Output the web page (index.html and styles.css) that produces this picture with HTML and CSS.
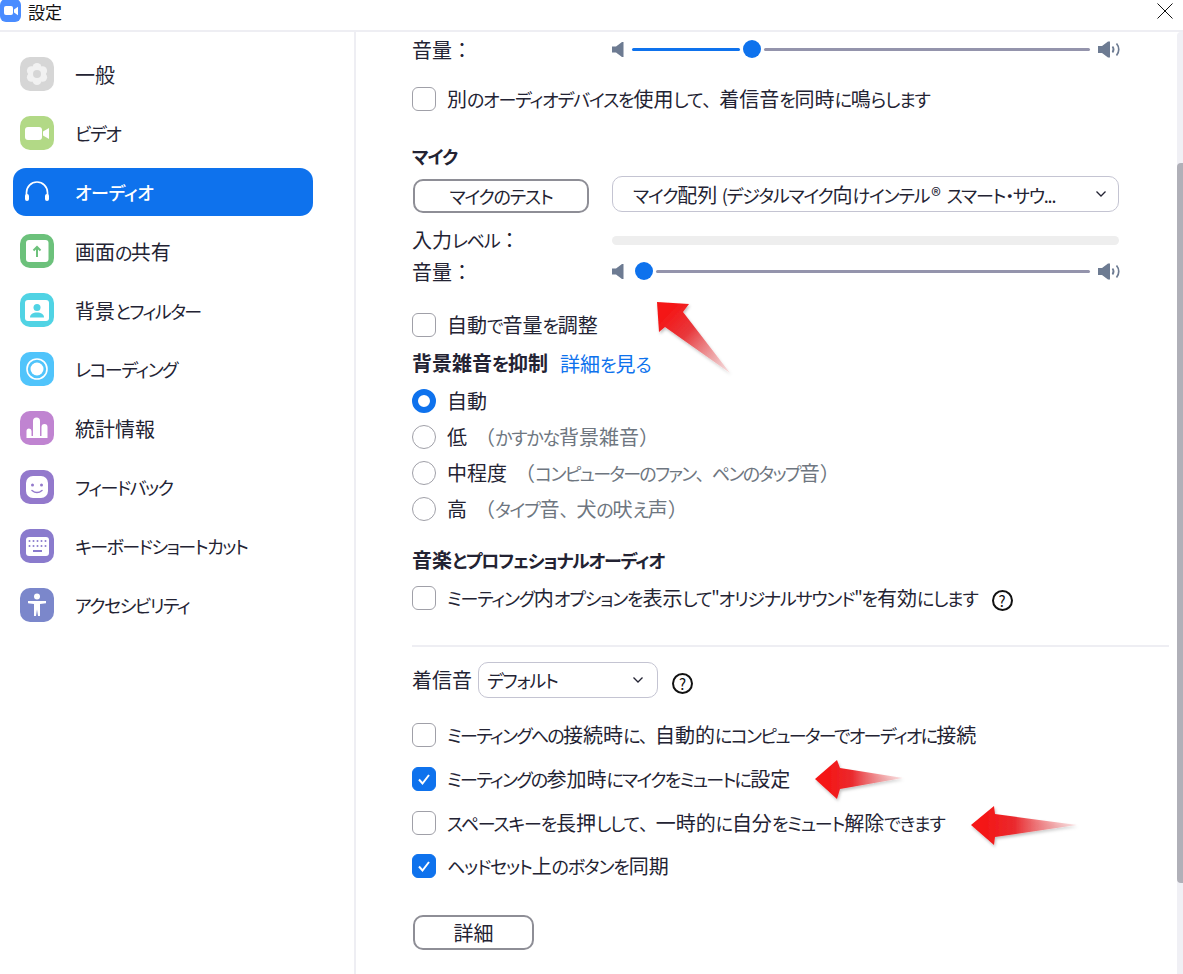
FILE: index.html
```html
<!DOCTYPE html>
<html lang="ja">
<head>
<meta charset="utf-8">
<title>設定</title>
<link rel="stylesheet" href="styles.css">
</head>
<body>
<div class="window">
  <header class="titlebar">
    <svg class="logo" viewBox="0 0 21 22"><rect x="0" y="-1" width="21" height="23" rx="6" fill="#4a8cff"/><rect x="4" y="6" width="9" height="9" rx="2" fill="#fff"/><path d="M14 9.500l4-2.700v8.400l-4-2.700z" fill="#fff"/></svg>
    <span class="title">設定</span>
    <svg class="close" viewBox="0 0 16 16"><path d="M.5.5l15 15M15.500.5l-15 15" stroke="#111" stroke-width="1" fill="none"/></svg>
  </header>
  <div class="body">
    <nav class="sidebar">
      <a class="nav-item"><svg class="nav-icon" viewBox="0 0 34 34"><rect width="34" height="34" rx="10" fill="#d6d6d6"/><g fill="#f1f1f1"><circle cx="17" cy="10.500" r="4.500"/><circle cx="17" cy="23.500" r="4.500"/><circle cx="11.400" cy="13.750" r="4.500"/><circle cx="22.600" cy="13.750" r="4.500"/><circle cx="11.400" cy="20.250" r="4.500"/><circle cx="22.600" cy="20.250" r="4.500"/><circle cx="17" cy="17" r="7"/></g><circle cx="17" cy="17" r="4" fill="#d6d6d6"/></svg><span>一般</span></a>
      <a class="nav-item"><svg class="nav-icon" viewBox="0 0 34 34"><rect width="34" height="34" rx="10" fill="#b2d986"/><rect x="5" y="11" width="17" height="13" rx="3" fill="#fff"/><path d="M23 15.500l6-3.500v11l-6-3.500z" fill="#fff"/></svg><span class="k">ビデオ</span></a>
      <a class="nav-item active"><svg class="nav-icon" viewBox="0 0 34 34"><path d="M6.500 22v-4.500a10.500 10.500 0 0 1 21 0v4.500" fill="none" stroke="#fff" stroke-width="1.700"/><rect x="5" y="19" width="4" height="7" rx="2" fill="#fff"/><rect x="25" y="19" width="4" height="7" rx="2" fill="#fff"/></svg><span class="k">オーディオ</span></a>
      <a class="nav-item"><svg class="nav-icon" viewBox="0 0 34 34"><rect width="34" height="34" rx="10" fill="#6cc17b"/><rect x="6" y="6" width="22.500" height="22" rx="3" fill="#fff"/><path d="M17 23v-9M13.500 16.500l3.500-3.500 3.500 3.500" fill="none" stroke="#6cc17b" stroke-width="2"/></svg><span>画面<span class="k">の</span>共有</span></a>
      <a class="nav-item"><svg class="nav-icon" viewBox="0 0 34 34"><rect width="34" height="34" rx="10" fill="#50d3e4"/><rect x="5" y="7" width="24" height="21" rx="3" fill="#fff"/><circle cx="17" cy="14.500" r="3.500" fill="#50d3e4"/><path d="M10 24.500c0-3.500 3-5 7-5s7 1.500 7 5z" fill="#50d3e4"/></svg><span>背景<span class="k">とフィルター</span></span></a>
      <a class="nav-item"><svg class="nav-icon" viewBox="0 0 34 34"><rect width="34" height="34" rx="10" fill="#50c4fb"/><circle cx="17" cy="17" r="10" fill="none" stroke="#fff" stroke-width="1.600"/><circle cx="17" cy="17" r="6.500" fill="#fff"/></svg><span class="k">レコーディング</span></a>
      <a class="nav-item"><svg class="nav-icon" viewBox="0 0 34 34"><rect width="34" height="34" rx="10" fill="#c084d1"/><path d="M6.500 27v-7a2.500 2.500 0 0 1 5 0v5h1.500v-15a3.500 3.500 0 0 1 7 0v15h1.500v-9a3 3 0 0 1 6 0v11z" fill="#fff"/></svg><span>統計情報</span></a>
      <a class="nav-item"><svg class="nav-icon" viewBox="0 0 34 34"><rect width="34" height="34" rx="10" fill="#9379cc"/><rect x="6" y="6" width="22" height="22" rx="7" fill="#fff"/><circle cx="12.500" cy="15" r="1.500" fill="#9379cc"/><circle cx="21.500" cy="15" r="1.500" fill="#9379cc"/><path d="M12 20.500c3 2.500 7 2.500 10 0" fill="none" stroke="#9379cc" stroke-width="1.500" stroke-linecap="round"/></svg><span class="k">フィードバック</span></a>
      <a class="nav-item"><svg class="nav-icon" viewBox="0 0 34 34"><rect width="34" height="34" rx="10" fill="#8a7bcd"/><rect x="6" y="8" width="23" height="19" rx="3" fill="#fff"/><g fill="#8a7bcd"><circle cx="9.500" cy="12" r="1"/><circle cx="13.500" cy="12" r="1"/><circle cx="17.500" cy="12" r="1"/><circle cx="21.500" cy="12" r="1"/><circle cx="25.500" cy="12" r="1"/><circle cx="9.500" cy="17" r="1"/><circle cx="13.500" cy="17" r="1"/><circle cx="17.500" cy="17" r="1"/><circle cx="21.500" cy="17" r="1"/><circle cx="25.500" cy="17" r="1"/><rect x="13" y="21" width="9" height="2"/></g></svg><span class="k">キーボードショートカット</span></a>
      <a class="nav-item"><svg class="nav-icon" viewBox="0 0 34 34"><rect width="34" height="34" rx="10" fill="#7b87cb"/><circle cx="17" cy="8.500" r="3" fill="#fff"/><path d="M8 13h18v2.200l-6 .8v12h-2l-1-6.500-1 6.500h-2v-12l-6-.8z" fill="#fff"/></svg><span class="k">アクセシビリティ</span></a>
    </nav>
    <main class="content">
      <div class="pane">
        <div class="row row-vol-1">
          <span class="label">音量<span class="fw">：</span></span>
          <div class="slider">
            <svg class="spk-low" viewBox="0 0 12 15"><path d="M0 4.500h4l6-4.500h1.500v15h-1.500l-6-4.500h-4z" fill="#6d7b92"/></svg>
            <span class="track track-on track-a"></span><span class="thumb"></span><span class="track"></span>
            <svg class="spk-high" viewBox="0 0 23 17"><path d="M0 5h4l6-4.500h2v16h-2l-6-4.500h-4z" fill="#6d7b92"/><path d="M14.500 5.500c1.500 2 1.500 4 0 6M18.500 2.500c3 3.500 3 8.500 0 12" stroke="#6d7b92" stroke-width="1.700" fill="none"/></svg>
          </div>
        </div>
        <label class="check m22"><span class="box"></span><span>別<span class="k">のオーディオデバイスを</span>使用<span class="k">して<span class="fw">、</span></span>着信音<span class="k">を</span>同時<span class="k">に</span>鳴<span class="k">らします</span></span></label>

        <h2 class="heading m33 k">マイク</h2>
        <div class="row row-mic">
          <button class="btn btn-test k">マイクのテスト</button>
          <div class="select select-mic"><span class="select-text"><span class="k">マイク</span>配列 <span class="k">(デジタルマイク</span>向<span class="k">けインテル<span class="reg">®</span>スマート・サウ...</span></span><svg class="chev" viewBox="0 0 10 6"><path d="M.5.500l4.500 4.500 4.500-4.500" fill="none" stroke="#232333" stroke-width="1.300"/></svg></div>
        </div>
        <div class="row row-level"><span class="label">入力<span class="k">レベル</span><span class="fw">：</span></span><span class="level"></span></div>
        <div class="row row-vol-2">
          <span class="label">音量<span class="fw">：</span></span>
          <div class="slider">
            <svg class="spk-low" viewBox="0 0 12 15"><path d="M0 4.500h4l6-4.500h1.500v15h-1.500l-6-4.500h-4z" fill="#6d7b92"/></svg>
            <span class="thumb thumb-min"></span><span class="track"></span>
            <svg class="spk-high" viewBox="0 0 23 17"><path d="M0 5h4l6-4.500h2v16h-2l-6-4.500h-4z" fill="#6d7b92"/><path d="M14.500 5.500c1.500 2 1.500 4 0 6M18.500 2.500c3 3.500 3 8.500 0 12" stroke="#6d7b92" stroke-width="1.700" fill="none"/></svg>
          </div>
        </div>
        <label class="check m29"><span class="box"></span><span>自動<span class="k">で</span>音量<span class="k">を</span>調整</span></label>

        <div class="heading-row m14"><h2 class="heading">背景雑音<span class="k">を</span>抑制</h2><a class="link">詳細<span class="k">を</span>見<span class="k">る</span></a></div>
        <div class="radios">
          <label class="check"><span class="radio on"></span><span>自動</span></label>
          <label class="check"><span class="radio"></span><span>低</span><span class="hint"><span class="fw">（</span><span class="k">かすかな</span>背景雑音<span class="fw">）</span></span></label>
          <label class="check"><span class="radio"></span><span>中程度</span><span class="hint"><span class="fw">（</span><span class="k tight">コンピューターのファン<span class="fw">、</span>ペンのタップ</span>音<span class="fw">）</span></span></label>
          <label class="check"><span class="radio"></span><span>高</span><span class="hint"><span class="fw">（</span><span class="k">タイプ</span>音<span class="k fw">、</span>犬<span class="k">の</span>吠<span class="k">え</span>声<span class="fw">）</span></span></label>
        </div>

        <h2 class="heading m27">音楽<span class="k">とプロフェショナルオーディオ</span></h2>
        <label class="check m14"><span class="box"></span><span><span class="k">ミーティング</span>内<span class="k">オプションを</span>表示<span class="k">して"オリジナルサウンド"を</span>有効<span class="k">にします</span></span><span class="help help-a">?</span></label>

        <hr class="divider">

        <div class="row row-ring">
          <span class="ring-label">着信音</span>
          <div class="select select-ring"><span class="select-text k">デフォルト</span><svg class="chev" viewBox="0 0 10 6"><path d="M.5.500l4.500 4.500 4.500-4.500" fill="none" stroke="#232333" stroke-width="1.300"/></svg></div>
          <span class="help help-b">?</span>
        </div>
        <label class="check m26"><span class="box"></span><span><span class="k tight">ミーティングへの</span>接続時<span class="k tight">に<span class="fw">、</span></span>自動的<span class="k tight">にコンピューターでオーディオに</span>接続</span></label>
        <label class="check m20"><span class="box checked"><svg viewBox="0 0 24 24"><path d="M7 12.500l3.500 4L17 8" fill="none" stroke="#fff" stroke-width="2"/></svg></span><span><span class="k tight">ミーティングの</span>参加時<span class="k tight">にマイクをミュートに</span>設定</span></label>
        <label class="check m20"><span class="box"></span><span><span class="k">スペースキーを</span>長押<span class="k">しして<span class="fw">、</span></span>一時的<span class="k">に</span>自分<span class="k">をミュート</span>解除<span class="k">できます</span></span></label>
        <label class="check m19"><span class="box checked"><svg viewBox="0 0 24 24"><path d="M7 12.500l3.500 4L17 8" fill="none" stroke="#fff" stroke-width="2"/></svg></span><span><span class="k">ヘッドセット</span>上<span class="k">のボタンを</span>同期</span></label>
        <button class="btn btn-detail">詳細</button>
      </div>
      <div class="scrollbar"><span class="scroll-thumb"></span></div>
    </main>
  </div>
  <svg class="annotations" viewBox="0 0 1183 974">
    <defs>
      <linearGradient id="ga" gradientUnits="userSpaceOnUse" x1="665" y1="312" x2="730" y2="373"><stop offset="0" stop-color="#f51414"/><stop offset=".35" stop-color="#e8383c"/><stop offset="1" stop-color="#f4c4c6" stop-opacity=".5"/></linearGradient>
      <linearGradient id="gb" gradientUnits="userSpaceOnUse" x1="825" y1="779" x2="903" y2="779"><stop offset="0" stop-color="#f51414"/><stop offset=".35" stop-color="#ea2a2e"/><stop offset="1" stop-color="#f4c4c6" stop-opacity=".5"/></linearGradient>
      <linearGradient id="gc" gradientUnits="userSpaceOnUse" x1="981" y1="825" x2="1077" y2="825"><stop offset="0" stop-color="#f51414"/><stop offset=".35" stop-color="#ea2a2e"/><stop offset="1" stop-color="#f4c4c6" stop-opacity=".5"/></linearGradient>
      <filter id="sh" x="-20%" y="-20%" width="140%" height="140%"><feDropShadow dx="1" dy="2" stdDeviation="1.500" flood-color="#000" flood-opacity=".25"/></filter>
    </defs>
    <path d="M657 302L689 304L683 312L730 373L665 327L659 332Z" fill="url(#ga)" filter="url(#sh)"/>
    <path d="M815 779L837 760L840 768L903 778L840 789L837 799Z" fill="url(#gb)" filter="url(#sh)"/>
    <path d="M971 825L994 806L995 814L1077 825L995 837L994 845Z" fill="url(#gc)" filter="url(#sh)"/>
  </svg>
</div>
</body>
</html>
```
FILE: styles.css
```css
* { box-sizing: border-box; }
html, body { margin: 0; padding: 0; background: #fff; }
body {
  font-family: "Noto Sans CJK JP", "Noto Sans", sans-serif;
  font-feature-settings: "palt";
  color: #232333;
  font-size: 20px;
}
.k { font-size: 18px; letter-spacing: -1.200px; }
.k.tight { letter-spacing: -1.700px; }
.fw { font-feature-settings: normal; }
.reg { font-size: 20px; letter-spacing: 0; margin: 0 6px 0 2px; }
.window { position: relative; width: 1183px; height: 974px; overflow: hidden; display: flex; flex-direction: column; }
.titlebar { height: 32px; flex: none; border-bottom: 2px solid #eeeef3; display: flex; align-items: flex-start; }
.logo { width: 21px; height: 22px; flex: none; }
.title { margin-left: 7px; font-size: 17px; line-height: 24px; color: #111; }
.close { width: 16px; height: 16px; margin: 3px 10px 0 auto; flex: none; }
.body { flex: 1; display: flex; min-height: 0; }
.sidebar { width: 356px; flex: none; border-right: 2px solid #eeeef3; padding: 18px 0 0 13px; display: flex; flex-direction: column; gap: 11px; }
.nav-item { width: 299.500px; height: 48px; padding-left: 7px; border-radius: 13px; display: flex; align-items: center; gap: 21px; }
.nav-item .k { letter-spacing: -1.500px; }
.nav-item.active { background: #0e72ed; color: #fff; font-weight: 500; }
.nav-item.active .k { letter-spacing: -.4px; }
.nav-icon { width: 34px; height: 34px; flex: none; }
.content { flex: 1; display: flex; min-width: 0; }
.pane { flex: 1; padding: 3px 8px 0 56px; display: flex; flex-direction: column; align-items: flex-start; min-width: 0; }
.scrollbar { width: 6px; flex: none; background: #f0f0f5; border-radius: 4px 0 0 0; }
.scroll-thumb { display: block; margin-top: 131px; height: 720px; background: #b0b0b8; border-radius: 4px 0 0 4px; }
.row { display: flex; align-items: center; width: 100%; }
.label { width: 200px; flex: none; line-height: 24px; }
.row-vol-1 { height: 30px; }
.row-vol-2 { height: 24px; margin-top: 8px; }
.row-mic { height: 36px; margin-top: 8px; align-items: flex-start; }
.row-level { height: 24px; margin-top: 16px; }
.row-ring { height: 35px; margin-top: 15px; }
.slider { width: 509px; height: 20px; margin-top: -2px; display: flex; align-items: center; }
.spk-low { width: 12px; height: 15px; flex: none; }
.spk-high { width: 23px; height: 17px; flex: none; margin-left: 8px; }
.track { flex: 1; height: 3px; background: #9494ac; border-radius: 2px; }
.track-on { background: #0e72ed; }
.track-a { flex: none; width: 108px; margin-left: 8px; }
.thumb { width: 18px; height: 18px; border-radius: 50%; background: #0e72ed; flex: none; margin: 0 3px; }
.thumb-min { margin: 0 3px 0 11px; }
.check { display: flex; align-items: center; height: 24px; line-height: 24px; white-space: nowrap; }
.box { width: 24px; height: 24px; flex: none; margin-right: 11px; border: 1.500px solid #a0a0a8; border-radius: 6px; background: #fff; }
.box.checked { background: #0e72ed; border-color: #0e72ed; display: block; }
.box.checked svg { display: block; width: 24px; height: 24px; margin: -1.500px; }
.radio { width: 24px; height: 24px; flex: none; margin-right: 11px; border: 1.500px solid #a0a0a8; border-radius: 50%; }
.radio.on { border: 6.500px solid #0e72ed; }
.radios { display: flex; flex-direction: column; gap: 12px; margin-top: 14px; }
.hint { margin-left: 8px; color: #6e7680; }
.heading { margin: 0; font-size: 20px; line-height: 24px; font-weight: 700; color: #232333; }
.heading.k { font-size: 18px; }
.heading-row { display: flex; gap: 12px; align-items: center; height: 24px; }
.link { color: #0e72ed; }
.m14 { margin-top: 14px; } .m19 { margin-top: 19px; } .m20 { margin-top: 20px; }
.m22 { margin-top: 22px; } .m26 { margin-top: 26px; } .m27 { margin-top: 27px; } .m29 { margin-top: 29px; } .m33 { margin-top: 33px; }
.btn { font-family: inherit; font-feature-settings: inherit; font-size: 20px; color: #232333; background: #fff; border: 2px solid #8e8e96; border-radius: 10px; padding: 0; }
.btn.k { font-size: 18px; }
.btn-test { width: 176px; height: 34px; margin: 3px 23px 0 1px; flex: none; }
.btn-detail { width: 121px; height: 35px; margin: 37px 0 0 1px; }
.select { height: 36px; border: 1.500px solid #c4c4d2; border-radius: 10px; display: flex; align-items: center; flex: none; }
.select-mic { width: 507px; padding: 0 12px 0 20px; }
.select-ring { width: 180px; padding: 0 14px 0 8px; }
.select-text { flex: 1; white-space: nowrap; overflow: hidden; }
.chev { width: 10px; height: 6px; flex: none; }
.level { width: 507px; height: 9px; background: #eeeeee; border-radius: 5px; flex: none; }
.help { width: 21px; height: 21px; border: 2px solid #111; border-radius: 50%; display: flex; align-items: center; justify-content: center; font-size: 15px; line-height: 1; color: #111; flex: none; }
.help-a { margin: 4px 0 0 14px; }
.help-b { margin: 8px 0 0 14px; }
.ring-label { width: 66px; flex: none; }
.divider { width: 757px; height: 2px; border: 0; background: #eeeef3; margin: 35px 0 0; flex: none; }
.annotations { position: absolute; left: 0; top: 0; width: 1183px; height: 974px; pointer-events: none; }
```
